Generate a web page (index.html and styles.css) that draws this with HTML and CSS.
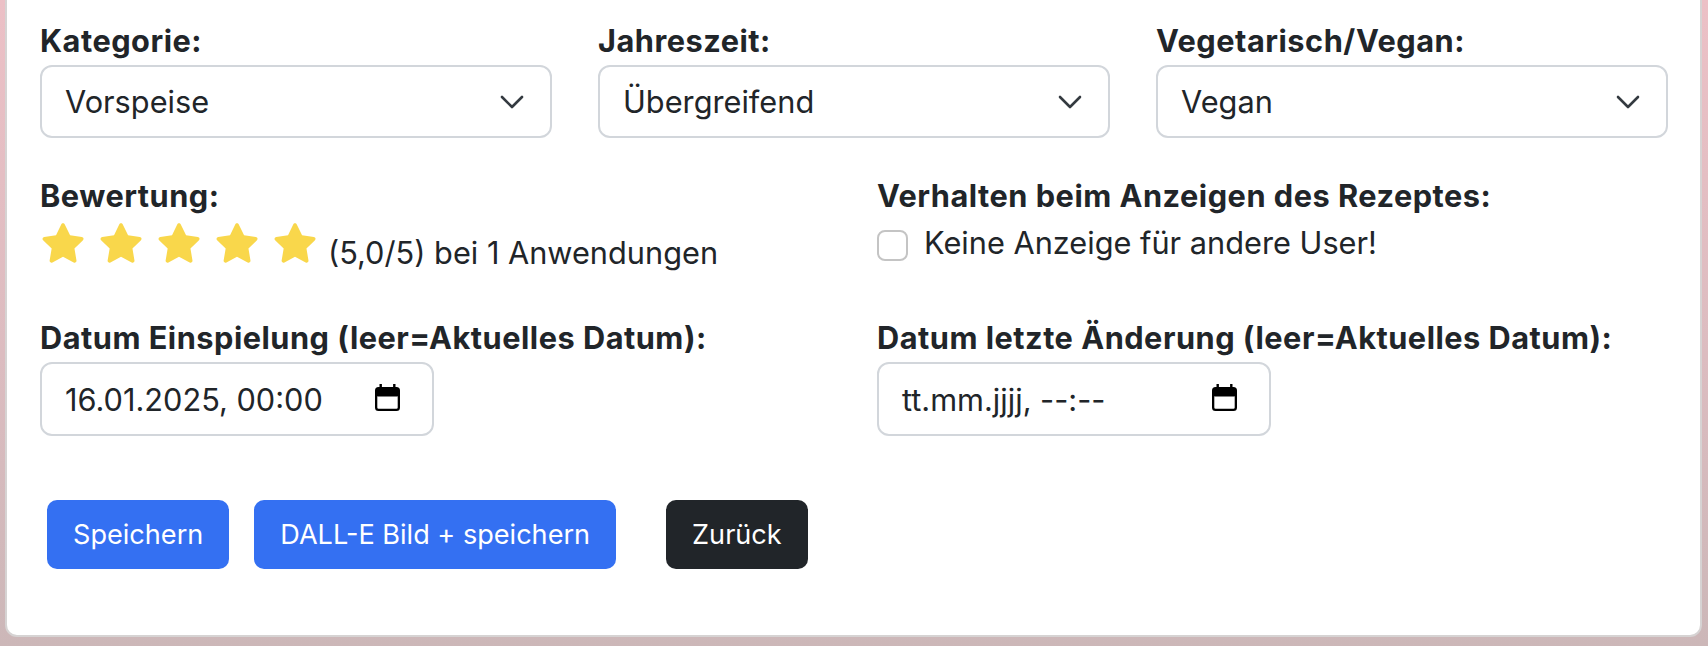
FILE: index.html
```html
<!DOCTYPE html>
<html lang="de">
<head>
    <meta charset="UTF-8">
    <meta name="viewport" content="width=device-width, initial-scale=1.0">
    <title>Rezept bearbeiten</title>
    <link rel="stylesheet" href="styles.css">
</head>
<body>
    <div class="page">
        <div class="card">
            <form id="recipeForm">
                <div class="row row-3">
                    <div class="field">
                        <label>Kategorie:</label>
                        <div class="select">
                            <span>Vorspeise</span>
                            <svg class="chevron" width="24" height="14" viewBox="0 0 24 14"><path d="M2 2l10 10 10-10"/></svg>
                        </div>
                    </div>
                    <div class="field">
                        <label>Jahreszeit:</label>
                        <div class="select">
                            <span>Übergreifend</span>
                            <svg class="chevron" width="24" height="14" viewBox="0 0 24 14"><path d="M2 2l10 10 10-10"/></svg>
                        </div>
                    </div>
                    <div class="field">
                        <label>Vegetarisch/Vegan:</label>
                        <div class="select">
                            <span>Vegan</span>
                            <svg class="chevron" width="24" height="14" viewBox="0 0 24 14"><path d="M2 2l10 10 10-10"/></svg>
                        </div>
                    </div>
                </div>

                <div class="row row-2 row-rating">
                    <div class="field">
                        <label>Bewertung:</label>
                        <div class="rating">
                            <span class="stars" id="stars"></span>
                            <span class="rating-text">(5,0/5) bei 1 Anwendungen</span>
                        </div>
                    </div>
                    <div class="field">
                        <label>Verhalten beim Anzeigen des Rezeptes:</label>
                        <div class="check">
                            <span class="check-box"></span>
                            <span>Keine Anzeige für andere User!</span>
                        </div>
                    </div>
                </div>

                <div class="row row-2 row-dates">
                    <div class="field">
                        <label>Datum Einspielung (leer=Aktuelles Datum):</label>
                        <div class="date-input">
                            <span>16.01.2025, 00:00</span>
                            <svg class="calendar" width="25" height="27" viewBox="0 0 25 27">
                                <rect x="4.5" y="0" width="2.4" height="4"/>
                                <rect x="18.1" y="0" width="2.4" height="4"/>
                                <rect class="cal-body" x="1.15" y="4.15" width="22.7" height="21.7" rx="2.4"/>
                                <rect x="1" y="4" width="23" height="8.5" rx="2"/>
                            </svg>
                        </div>
                    </div>
                    <div class="field">
                        <label>Datum letzte Änderung (leer=Aktuelles Datum):</label>
                        <div class="date-input">
                            <span>tt.mm.jjjj, --:--</span>
                            <svg class="calendar" width="25" height="27" viewBox="0 0 25 27">
                                <rect x="4.5" y="0" width="2.4" height="4"/>
                                <rect x="18.1" y="0" width="2.4" height="4"/>
                                <rect class="cal-body" x="1.15" y="4.15" width="22.7" height="21.7" rx="2.4"/>
                                <rect x="1" y="4" width="23" height="8.5" rx="2"/>
                            </svg>
                        </div>
                    </div>
                </div>

                <div class="actions">
                    <button type="submit" class="btn btn-primary">Speichern</button>
                    <button type="button" class="btn btn-primary">DALL-E Bild + speichern</button>
                    <button type="button" class="btn btn-dark btn-back">Zurück</button>
                </div>
            </form>
        </div>
    </div>

    <script>
        // fill the rating stars
        const rating = 5;
        const starPath = 'M21 3.2c.7 0 1.3.4 1.6 1l4.7 9.6 10.5 1.5c.7.1 1.2.6 1.4 1.2.2.6 0 1.3-.4 1.8l-7.6 7.4 1.8 10.5c.1.7-.2 1.3-.7 1.7-.5.4-1.2.4-1.8.1L21 33l-9.4 5c-.6.3-1.3.3-1.8-.1-.5-.4-.8-1-.7-1.7l1.8-10.5-7.6-7.4c-.5-.5-.6-1.2-.4-1.8.2-.6.7-1.1 1.4-1.2l10.5-1.5L19.4 4.2c.3-.6.9-1 1.6-1z';
        document.getElementById('stars').innerHTML = Array.from({ length: 5 }, (_, i) =>
            `<svg class="star ${i < rating ? 'on' : ''}" width="42" height="41" viewBox="2.3 3 37.4 36.3"><path d="${starPath}"/></svg>`
        ).join('');
    </script>
</body>
</html>
```

FILE: styles.css
```css
body {
    margin: 0;
    height: 646px;
    overflow: hidden;
    font-family: Inter, 'Liberation Sans', sans-serif;
    color: #212529;
    background: linear-gradient(180deg, #ecc0c6 0%, #dcbcc0 55%, #ccb7b8 100%);
}
.page {
    padding: 0 6px 0 5px;
}
.card {
    margin-top: -20px;
    background-color: #fff;
    border: 2px solid #d6d3d3;
    border-radius: 12px;
    padding: 36px 32px 66px 33px;
}
.row {
    display: grid;
    column-gap: 46px;
}
.row-3 {
    grid-template-columns: repeat(3, 1fr);
}
.row-2 {
    grid-template-columns: 1fr 1fr;
}
.row-rating {
    margin-top: 35px;
}
.row-dates {
    margin-top: 39px;
}
.field label {
    display: block;
    font-weight: 700;
    font-size: 30.72px;
    line-height: 46px;
    letter-spacing: 0.5px;
}
.select,
.date-input {
    box-sizing: border-box;
    height: 73px;
    margin-top: 1px;
    border: 2px solid #d2d6db;
    border-radius: 12px;
    display: flex;
    align-items: center;
    justify-content: space-between;
    font-size: 30.72px;
}
.select {
    padding: 0 26px 0 23px;
}
.chevron path {
    fill: none;
    stroke: #343a40;
    stroke-width: 2.6;
    stroke-linecap: round;
    stroke-linejoin: round;
}
.date-input {
    width: 394px;
    height: 74px;
    padding: 0 32px 0 23px;
}
.calendar {
    margin-top: -4px;
}
.calendar rect {
    fill: #000;
}
.calendar .cal-body {
    fill: none;
    stroke: #000;
    stroke-width: 2.3;
}
.rating {
    display: flex;
    align-items: baseline;
    margin-top: 4px;
    font-size: 30.72px;
    line-height: 46px;
}
.stars {
    display: flex;
    gap: 16px;
    margin-left: 2px;
    align-items: flex-end;
}
.star {
    margin-bottom: 3px;
}
.star path {
    fill: #e3e3e3;
}
.star.on path {
    fill: #f9d74b;
}
.rating-text {
    margin-left: 12px;
}
.check {
    display: flex;
    align-items: flex-start;
    margin-top: 1px;
    font-size: 30.72px;
    line-height: 46px;
}
.check-box {
    box-sizing: border-box;
    width: 31px;
    height: 31px;
    margin-top: 10px;
    margin-right: 16px;
    border: 2px solid #c4c4c4;
    border-radius: 8px;
    flex-shrink: 0;
}
.actions {
    display: flex;
    gap: 25px;
    margin-top: 64px;
    padding-left: 7px;
}
.btn {
    height: 69px;
    padding: 0 26px;
    border: none;
    border-radius: 10px;
    font-family: Inter, 'Liberation Sans', sans-serif;
    font-size: 27.1px;
    color: #fff;
    cursor: pointer;
}
.btn-primary {
    background-color: #3470f2;
}
.btn-dark {
    background-color: #212529;
}
.btn-back {
    margin-left: 25px;
}
```
